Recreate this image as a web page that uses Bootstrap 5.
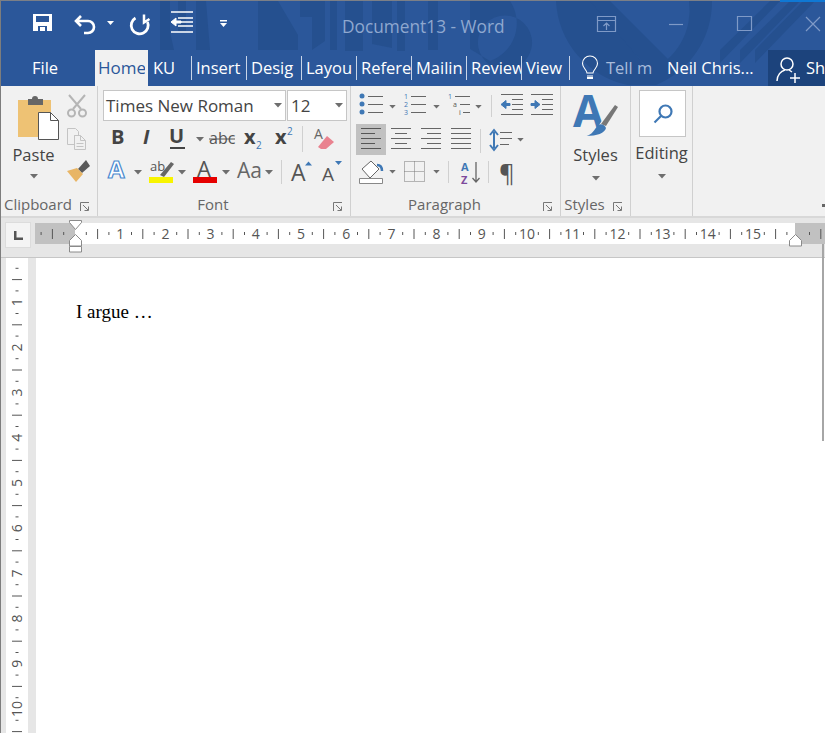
<!DOCTYPE html>
<html lang="en">
  <head>
    <meta charset="UTF-8" />
    <meta name="viewport" content="width=device-width, initial-scale=1.0" />
    <title>Document13 - Word</title>
    <link href="https://cdn.jsdelivr.net/npm/bootstrap@5.3.0/dist/css/bootstrap.min.css" rel="stylesheet" />
    <style>
      html, body { height: 733px; overflow: hidden; }
      body { background: #e6e6e6; font-family: "Open Sans", "Noto Sans", sans-serif; color: #444; border-left: 1px solid #7d7d7d; }
      svg { display: block; flex: none; }
      svg text { font-family: "Open Sans", "Noto Sans", sans-serif; }

      .word-head { position: relative; height: 86px; background: #2b579a; border-top: 1px solid #7b7f87; }
      .head-art { position: absolute; left: -1px; top: -1px; }
      .accent { position: absolute; right: 0; top: -1px; width: 45px; height: 2px; background: #0f78d4; }
      .title-row { position: relative; display: grid; grid-template-columns: 341px 250px 1fr; height: 49px; }
      .doc-title { font-size: 17.3px; line-height: 52px; color: #8fa8cf; white-space: nowrap; }

      .tabs { position: relative; height: 36px; flex-wrap: nowrap; }
      .tab { display: block; height: 36px; padding: 6px 0 0 0; font-size: 16.5px; line-height: 24px; color: #fff; white-space: nowrap; text-decoration: none; }
      .tab:hover, .tab:focus { color: #fff; }
      .tab-clip { display: block; height: 24px; overflow: hidden; border-right: 1px solid #c9d5e8; }
      .tab-file { width: 94px; padding-left: 31px; }
      .tab-home { width: 53px; padding-left: 3px; background: #f1f1f1; color: #2b579a; font-size: 17px; }
      .tab-home:hover { color: #2b579a; }
      .home-clip { display: block; width: 47px; overflow: hidden; }
      .tab-ku { width: 44px; padding-left: 5px; }
      .tab-ku .tab-clip { width: 39px; }
      .tab-std { width: 55px; }
      .tab-std .tab-clip { padding-left: 4px; }
      .tab-view { width: 48px; }
      .tab-view .tab-clip { padding-left: 4px; }
      .tell { width: 97px; padding-left: 11px; color: #a9bcdb; display: flex; gap: 7px; }
      .tell:hover { color: #a9bcdb; }
      .tell svg { margin-top: -1px; }
      .user { width: 101px; }
      .share { width: 57px; padding-left: 8px; background: #1c437c; display: flex; gap: 5px; overflow: hidden; }

      .ribbon { height: 132px; background: #f1f1f1; border-bottom: 2px solid #d8d8d8; }
      .group { position: relative; height: 130px; border-right: 1px solid #d0d0d0; flex: none; }
      .group-clip { width: 97px; }
      .group-font { width: 253px; padding-left: 5px; }
      .group-para { width: 210px; padding-left: 5px; }
      .group-styles { width: 70px; }
      .group-edit { width: 62px; }
      .group-label { position: absolute; bottom: 0; left: 0; right: 0; height: 26px; padding: 2px 22px 0 0; font-size: 15px; line-height: 24px; color: #666; text-align: center; }
      .launcher { position: absolute; top: 116px; right: 7px; }
      .big-btn { font-size: 16.5px; line-height: 22px; text-align: center; color: #444; }
      .rows { height: 98px; padding-top: 4px; }
      .tool-row { height: 33px; }
      .tool-row svg { overflow: visible; }
      .tool-row.first { height: 32px; }
      .combo { height: 31px; margin-bottom: 1px; background: #fff; border: 1px solid #c6c6c6; font-size: 17px; line-height: 29px; color: #444; padding-left: 2px; }
      .combo-font { width: 183px; }
      .combo-size { width: 60px; margin-left: 1px; padding-left: 3px; }
      .combo svg { margin-right: 3px; }
      .paste { width: 65px; padding-top: 8px; }
      .under-icon { margin-top: 2px; }
      .caret-gap { margin-top: 10px; }
      .small-tools { padding-top: 8px; gap: 9px; }
      .style-icon { margin-top: 3px; overflow: visible; }
      .find-box { width: 47px; height: 47px; margin: 4px 0 0 8px; background: #fff; border: 1px solid #c6c6c6; }
      .edit-label { margin-top: 5px; }
      .collapse-mark { margin-bottom: 9px; }

      .h-ruler-row { height: 40px; background: #e6e6e6; border-bottom: 1px solid #c6c6c6; }
      .corner { width: 26px; height: 26px; margin: 4px 0 0 4px; background: #f4f4f4; border: 1px solid #dcdcdc; }
      .sheet-row { height: 476px; }
      .v-ruler { width: 35px; }
      .sheet { flex: 1; background: #fff; padding: 43px 0 0 40px; font-family: "Liberation Serif", serif; font-size: 19px; line-height: 22px; color: #000; }
      .edge { position: absolute; right: 1px; top: 244px; width: 2px; height: 197px; background: #a6a6a6; }
    </style>
  </head>
  <body>
    <svg width="0" height="0" class="position-absolute">
      <symbol id="caret" viewBox="0 0 8 5"><path d="M0 0h8L4 4.500z" fill="#6e6e6e" /></symbol>
      <symbol id="launch" viewBox="0 0 10 10"><path d="M.5 9V.5H9M3 3l5 5M8.500 4.500V8.500H4.500" fill="none" stroke="#777" /></symbol>
    </svg>

    <header class="word-head">
      <svg class="head-art" width="825" height="86" viewBox="0 0 825 86">
        <g fill="#25508f">
          <path d="M160 1h10v31l4 18h-14zM178 1h8v30h-8zM196 1h10l4 49h-14zM258 1h20l20 34v15h-40zM300 1h12v16h-12z" />
          <path d="M312 1h13v40l-13 9zM330 1h7v49h-7zM345 1h18v50h-18zM372 1h20v47l-20 -4zM397 1h8v50h-8zM428 1h10v49h-10z" />
          <path d="M470 1h40a40 40 0 0 1 -20 60l-20 -12zM490 20a26 26 0 1 0 30 45a26 26 0 1 0 -30 -45z" />
          <path d="M556 1a90 90 0 0 0 72 84h28a90 90 0 0 0 56 -84h-23a66 66 0 0 1 -40 70l-55 -70z" />
          <path d="M590 1l60 70h30l-70 -70zM720 50l50 -49h10l-60 62zM740 50l50 -49h10l-60 62zM755 50l48 -49h12l-60 62z" />
        </g>
      </svg>
      <div class="accent"></div>
      <div class="title-row">
        <svg width="341" height="49" viewBox="1 1 341 49">
          <path d="M33 14h19v17H33z" fill="#fff" />
          <path d="M36 16h13v6H36z" fill="#2b579a" />
          <path d="M38 26h9v5h-9z" fill="#2b579a" /><path d="M40 27h5v4h-5z" fill="#fff" />
          <path d="M81 16l-5 5 5 5M77 21h11a6 6 0 0 1 0 12h-4" fill="none" stroke="#fff" stroke-width="2.600" />
          <path d="M107 21h7l-3.500 4z" fill="#fff" />
          <path d="M135.500 18a8.500 8.500 0 1 0 12 4" fill="none" stroke="#fff" stroke-width="2.800" />
          <path d="M144 14.500v8l5.500-3.500" fill="none" stroke="#fff" stroke-width="2.500" />
          <path d="M171 12h22M178 18h15M178 22h15M178 26h15M171 32h22" stroke="#fff" stroke-width="1.300" />
          <path d="M171 22l5 -4v3h5v2h-5v3z" fill="#fff" stroke="#fff" />
          <path d="M220 20h7v1.500h-7zM220 23h7l-3.500 4z" fill="#fff" />
        </svg>
        <div class="doc-title">Document13 - Word</div>
        <svg width="232" height="49" viewBox="592 1 232 49" fill="none" stroke="#7f9ac7" stroke-width="1.200">
          <path d="M597.500 16.500h18v15h-18zM597.500 20.500h18M606.500 30v-7M603.500 26l3 -3 3 3" />
          <path d="M669 24.500h14" />
          <path d="M737.500 16.500h14v14h-14z" />
          <path d="M806 17l14 14M820 17l-14 14" />
        </svg>
      </div>
      <nav class="nav tabs">
        <a class="tab tab-file" href="#">File</a>
        <a class="tab tab-home" href="#"><span class="home-clip">Home</span></a>
        <a class="tab tab-ku" href="#"><span class="tab-clip">KU</span></a>
        <a class="tab tab-std" href="#"><span class="tab-clip">Insert</span></a>
        <a class="tab tab-std" href="#"><span class="tab-clip">Desig</span></a>
        <a class="tab tab-std" href="#"><span class="tab-clip">Layou</span></a>
        <a class="tab tab-std" href="#"><span class="tab-clip">Refere</span></a>
        <a class="tab tab-std" href="#"><span class="tab-clip">Mailin</span></a>
        <a class="tab tab-std" href="#"><span class="tab-clip">Review</span></a>
        <a class="tab tab-view" href="#"><span class="tab-clip">View</span></a>
        <a class="tab tell" href="#">
          <svg width="18" height="26" viewBox="0 0 18 26" fill="none" stroke="#fff" stroke-width="1.100"><path d="M6 18c0-3-4.500-5-4.500-9.500a7.500 7.500 0 0 1 15 0C16.500 13 12 15 12 18zM6 21h6" /><path d="M6 23h6" stroke-width="2" /></svg>
          <span>Tell m</span>
        </a>
        <a class="tab user" href="#">Neil Chris...</a>
        <a class="tab share" href="#">
          <svg width="25" height="28" viewBox="0 0 25 28" fill="none" stroke="#fff" stroke-width="1.500"><circle cx="11" cy="8" r="6" /><path d="M1 25c0-6 4-10 8-11M13 14l3 2M14 22h10M19 17v10" /></svg>
          <span>Sh</span>
        </a>
      </nav>
    </header>

    <section class="ribbon d-flex">
      <!-- Clipboard -->
      <div class="group group-clip d-flex">
        <div class="paste big-btn">
          <svg class="mx-auto" width="50" height="48" viewBox="8 94 50 48">
            <path d="M17 100h33v37H17z" fill="#eec274" />
            <path d="M27 99h4a3 3 0 0 1 6 0h5v6H27z" fill="#666" />
            <path d="M37.500 112.500h12l8 8v19h-20z" fill="#fff" stroke="#555" />
            <path d="M49.500 112.500v8h8" fill="none" stroke="#555" />
          </svg>
          <div class="under-icon">Paste</div>
          <svg class="mx-auto mt-2" width="8" height="5"><use href="#caret" /></svg>
        </div>
        <div class="small-tools d-flex flex-column">
          <svg width="22" height="24" viewBox="66 94 22 24" fill="none" stroke="#b5b5b5" stroke-width="2"><path d="M69 95l12 14M85 95L73 109" /><circle cx="71.500" cy="113" r="3.500" /><circle cx="82.500" cy="113" r="3.500" /></svg>
          <svg width="22" height="23" viewBox="67 127 22 23" fill="none" stroke="#c4c4c4"><path d="M68.500 128.500h8l3 3v4h-4v9h-7zM75.500 135.500h6l5 5v9h-11zM81.500 135.500v5h5M77.500 143.500h7M77.500 146.500h7" /></svg>
          <svg width="25" height="24" viewBox="66 160 25 24"><path d="M78 170l4 4 8-7-4-6z" fill="#5a5a5a" /><path d="M67 172l10-3 6 6-7 8z" fill="#e8b565" /></svg>
        </div>
        <div class="group-label">Clipboard</div>
        <svg class="launcher" width="10" height="10"><use href="#launch" /></svg>
      </div>
      <!-- Font -->
      <div class="group group-font">
        <div class="rows">
          <div class="d-flex">
            <div class="combo combo-font d-flex align-items-center justify-content-between"><span>Times New Roman</span><svg width="8" height="5"><use href="#caret" /></svg></div>
            <div class="combo combo-size d-flex align-items-center justify-content-between"><span>12</span><svg width="8" height="5"><use href="#caret" /></svg></div>
          </div>
          <div class="tool-row d-flex">
            <svg width="31" height="33" viewBox="103 122 31 33"><text x="111" y="144" font-size="20" font-weight="700" fill="#444">B</text></svg>
            <svg width="28" height="33" viewBox="134 122 28 33"><text x="143" y="144" font-size="20" font-weight="700" font-style="italic" fill="#444">I</text></svg>
            <svg width="44" height="33" viewBox="162 122 44 33"><text x="169" y="143" font-size="20" font-weight="700" fill="#444">U</text><path d="M170 148h15" stroke="#444" stroke-width="2" /><use href="#caret" x="196" y="137" width="8" height="5" /></svg>
            <svg width="33" height="33" viewBox="206 122 33 33"><text x="209" y="144" font-size="16" fill="#555">abc</text><path d="M209 139h26" stroke="#555" /></svg>
            <svg width="31" height="33" viewBox="239 122 31 33"><text x="244" y="144" font-size="20" font-weight="700" fill="#444">x</text><text x="256" y="149" font-size="10" fill="#3f78b5">2</text></svg>
            <svg width="30" height="33" viewBox="270 122 30 33"><text x="275" y="144" font-size="20" font-weight="700" fill="#444">x</text><text x="287" y="135" font-size="10" fill="#3f78b5">2</text></svg>
            <svg width="47" height="33" viewBox="300 122 47 33"><path d="M302.500 126v26" stroke="#d0d0d0" /><text x="314" y="139" font-size="14" fill="#666">A</text><path d="M318 147l9-11 7 6-8 7h-5z" fill="#e9828f" /></svg>
          </div>
          <div class="tool-row d-flex">
            <svg width="42" height="33" viewBox="103 155 42 33"><text x="108" y="178" font-size="24" font-weight="700" fill="#fff" stroke="#4a8ad0" stroke-width="1.200">A</text><use href="#caret" x="134" y="170" width="8" height="5" /></svg>
            <svg width="44" height="33" viewBox="145 155 44 33"><text x="150" y="171" font-size="13" fill="#555">ab</text><path d="M160 175l11-13 3 2-10 13z" fill="#666" /><path d="M149 177h24v6h-24z" fill="#f8f400" /><use href="#caret" x="178" y="170" width="8" height="5" /></svg>
            <svg width="43" height="33" viewBox="189 155 43 33"><text x="197" y="177" font-size="22" fill="#555">A</text><path d="M193 177h24v6h-24z" fill="#e60000" /><use href="#caret" x="222" y="170" width="8" height="5" /></svg>
            <svg width="45" height="33" viewBox="232 155 45 33"><text x="237" y="178" font-size="21" fill="#666">Aa</text><use href="#caret" x="265" y="170" width="8" height="5" /></svg>
            <svg width="40" height="33" viewBox="277 155 40 33"><path d="M281.500 160v24" stroke="#d0d0d0" /><text x="291" y="181" font-size="23" fill="#555">A</text><path d="M305 165.500l3.500-4 3.500 4z" fill="#3f78b5" /></svg>
            <svg width="30" height="33" viewBox="317 155 30 33"><text x="322" y="181" font-size="19" fill="#555">A</text><path d="M335 161h7l-3.500 4z" fill="#3f78b5" /></svg>
          </div>
        </div>
        <div class="group-label">Font</div>
        <svg class="launcher" width="10" height="10"><use href="#launch" /></svg>
      </div>
      <!-- Paragraph -->
      <div class="group group-para">
        <div class="rows">
          <div class="tool-row first d-flex">
            <svg width="44" height="33" viewBox="356 90 44 33"><g fill="#3f78b5"><circle cx="362" cy="96" r="2.500" /><circle cx="362" cy="104" r="2.500" /><circle cx="362" cy="112" r="2.500" /></g><path d="M368 96.500h15M368 104.500h15M368 112.500h15" stroke="#666" /><use href="#caret" x="389" y="105" width="7" height="4" /></svg>
            <svg width="43" height="33" viewBox="400 90 43 33"><g font-size="7" fill="#3f78b5"><text x="404" y="99">1</text><text x="404" y="107">2</text><text x="404" y="115">3</text></g><path d="M411 96.500h15M411 104.500h15M411 112.500h15" stroke="#666" /><use href="#caret" x="433" y="105" width="7" height="4" /></svg>
            <svg width="52" height="33" viewBox="443 90 52 33"><g font-size="7" fill="#555"><text x="448" y="99" fill="#3f78b5">1</text><text x="453" y="107">a</text><text x="459" y="115">i</text></g><path d="M455 96.500h15M460 104.500h10M463 112.500h7" stroke="#666" /><use href="#caret" x="475" y="105" width="7" height="4" /><path d="M491.500 95v22" stroke="#d0d0d0" /></svg>
            <svg width="32" height="33" viewBox="495 90 32 33"><path d="M501 94.500h22M512 99.500h11M512 104.500h11M512 109.500h11M501 114.500h22" stroke="#666" /><path d="M501 104.500l5-4v3h4v2h-4v3z" fill="#3f78b5" stroke="#3f78b5" /></svg>
            <svg width="31" height="33" viewBox="527 90 31 33"><path d="M531 94.500h22M542 99.500h11M542 104.500h11M542 109.500h11M531 114.500h22" stroke="#666" /><path d="M540 104.500l-5-4v3h-4v2h4v3z" fill="#3f78b5" stroke="#3f78b5" /></svg>
          </div>
          <div class="tool-row d-flex">
            <svg width="32" height="33" viewBox="356 122 32 33"><path d="M356 124h30v31h-30z" fill="#c1c1c1" /><path d="M361 128.500h20M361 133.500h14M361 138.500h20M361 143.500h14M361 148.500h20" stroke="#555" /></svg>
            <svg width="30" height="33" viewBox="388 122 30 33"><path d="M391 128.500h20M395 133.500h12M391 138.500h20M395 143.500h12M391 148.500h20" stroke="#666" /></svg>
            <svg width="30" height="33" viewBox="418 122 30 33"><path d="M421 128.500h20M427 133.500h14M421 138.500h20M427 143.500h14M421 148.500h20" stroke="#666" /></svg>
            <svg width="28" height="33" viewBox="448 122 28 33"><path d="M451 128.500h20M451 133.500h20M451 138.500h20M451 143.500h20M451 148.500h20" stroke="#666" /></svg>
            <svg width="54" height="33" viewBox="476 122 54 33"><path d="M480.500 129v24" stroke="#d0d0d0" /><path d="M494 132v16M490 135l4-5 4 5M490 145l4 5 4-5" fill="none" stroke="#3f78b5" stroke-width="2" /><path d="M500 132.500h12M500 138.500h12M500 144.500h9" stroke="#666" /><use href="#caret" x="517" y="138" width="7" height="4" /></svg>
          </div>
          <div class="tool-row d-flex">
            <svg width="44" height="33" viewBox="356 155 44 33"><path d="M362 169l9-8 8 8-9 9z" fill="#fff" stroke="#666" /><path d="M377 165c3 0 5 2 5 6" stroke="#3f78b5" stroke-width="2.500" fill="none" /><path d="M359.500 178.500h23v5h-23z" fill="#fff" stroke="#888" /><use href="#caret" x="389" y="170" width="7" height="4" /></svg>
            <svg width="45" height="33" viewBox="400 155 45 33"><path d="M404.500 161.500h20v20h-20zM414.500 161.500v20M404.500 171.500h20" fill="none" stroke="#777" stroke-dasharray="1 1" /><use href="#caret" x="433" y="170" width="7" height="4" /></svg>
            <svg width="39" height="33" viewBox="445 155 39 33"><path d="M448.500 161v22" stroke="#d0d0d0" /><text x="461" y="171" font-size="11" font-weight="700" fill="#3f78b5">A</text><text x="461" y="184" font-size="11" font-weight="700" fill="#7d4a9c">Z</text><path d="M476 162v20M472.500 178l3.500 4 3.500-4" fill="none" stroke="#666" stroke-width="1.300" /></svg>
            <svg width="41" height="33" viewBox="484 155 41 33"><path d="M488.500 161v22" stroke="#d0d0d0" /><text x="499" y="182" font-size="24" fill="#555">¶</text></svg>
          </div>
        </div>
        <div class="group-label">Paragraph</div>
        <svg class="launcher" width="10" height="10"><use href="#launch" /></svg>
      </div>
      <!-- Styles -->
      <div class="group group-styles">
        <div class="big-btn">
          <svg class="style-icon mx-auto" width="69" height="55" viewBox="562 89 69 55">
            <text x="574" y="127" font-size="44" font-weight="700" fill="#3f78b5">A</text>
            <path d="M600 125l15-22 5 4-13 20z" fill="#f1f1f1" />
            <path d="M602 124l14-19 3 2-12 19z" fill="#777" />
            <path d="M587 136c6-1 8-6 12-11 3-2 7 0 8 3-1 5-9 8-20 8z" fill="#3f78b5" />
          </svg>
          <div>Styles</div>
          <svg class="caret-gap mx-auto" width="8" height="5"><use href="#caret" /></svg>
        </div>
        <div class="group-label">Styles</div>
        <svg class="launcher" width="10" height="10"><use href="#launch" /></svg>
      </div>
      <!-- Editing -->
      <div class="group group-edit">
        <div class="find-box d-flex align-items-center justify-content-center">
          <svg width="20" height="20" viewBox="0 0 20 20" fill="none" stroke="#3f78b5" stroke-width="2.200"><circle cx="12.500" cy="7.500" r="6" /><path d="M8 12L1.500 18.500" /></svg>
        </div>
        <div class="big-btn edit-label">Editing</div>
        <svg class="caret-gap mx-auto" width="8" height="5"><use href="#caret" /></svg>
      </div>
      <svg class="collapse-mark ms-auto align-self-end" width="3" height="3"><path d="M0 0h3v3H0z" fill="#666" /></svg>
    </section>

    <div class="h-ruler-row d-flex">
      <div class="corner d-flex align-items-center justify-content-center">
        <svg width="9" height="9" viewBox="0 0 9 9"><path d="M0 0h2.500v6.500H9V9H0z" fill="#555" /></svg>
      </div>
      <svg id="hRuler" class="ms-1" width="790" height="40" viewBox="35 218 790 40"></svg>
    </div>

    <div class="sheet-row d-flex">
      <div class="v-ruler">
        <svg id="vRuler" width="35" height="476" viewBox="1 258 35 476"></svg>
      </div>
      <div class="sheet">I argue …</div>
    </div>
    <div class="edge"></div>

    <script src="https://cdn.jsdelivr.net/npm/bootstrap@5.3.0/dist/js/bootstrap.bundle.min.js"></script>
    <script>
      const inch = 45.2;
      const tick = "#555";

      let h = '<rect x="35" y="223" width="790" height="21" fill="#fff"/>';
      h += '<rect x="35" y="223" width="40" height="21" fill="#c1c1c1"/>';
      h += '<rect x="795" y="223" width="30" height="21" fill="#c1c1c1"/>';
      for (let q = -3; q < 68; q++) {
        const x = 75 + q * inch / 4;
        if (q === 0 || q === 64) continue;
        if (q % 4 === 0) {
          h += `<text x="${x}" y="239" font-size="14" text-anchor="middle" fill="#555">${q / 4}</text>`;
        } else if (q % 2 === 0) {
          h += `<path d="M${x} 229v10" stroke="${tick}"/>`;
        } else {
          h += `<path d="M${x} 232v3" stroke="${tick}"/>`;
        }
      }
      // indent markers
      h += '<path d="M69.500 220.500h12v2l-6 7-6-7z" fill="#fff" stroke="#8a8a8a"/>';
      h += '<path d="M75.500 234.500l6 6v5.500h-12v-5.500z" fill="#fff" stroke="#8a8a8a"/>';
      h += '<path d="M69.500 246.500h12v5.500h-12z" fill="#fff" stroke="#8a8a8a"/>';
      h += '<path d="M795.500 234.500l6 6v5.500h-12v-5.500z" fill="#fff" stroke="#8a8a8a"/>';
      document.getElementById("hRuler").innerHTML = h;

      let v = '<rect x="6" y="258" width="22" height="476" fill="#fff"/>';
      for (let q = 1; q < 44; q++) {
        const y = 257 + q * inch / 4;
        if (q % 4 === 0) {
          v += `<text transform="translate(22 ${y}) rotate(-90)" font-size="14" text-anchor="middle" fill="#555">${q / 4}</text>`;
        } else if (q % 2 === 0) {
          v += `<path d="M12 ${y}h10" stroke="${tick}"/>`;
        } else {
          v += `<path d="M15.500 ${y}h3" stroke="${tick}"/>`;
        }
      }
      document.getElementById("vRuler").innerHTML = v;
    </script>
  </body>
</html>
